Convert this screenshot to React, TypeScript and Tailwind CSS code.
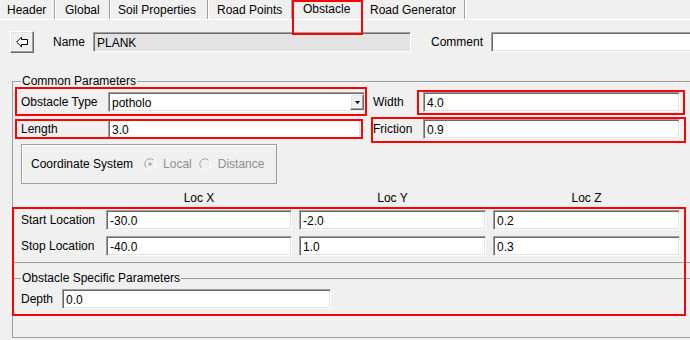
import React from 'react'

const sunken =
  'border border-t-[#a0a0a0] border-l-[#a0a0a0] border-b-white border-r-white shadow-[inset_1px_1px_0_#696969,inset_-1px_-1px_0_#e3e3e3]'
const raised =
  'border border-t-white border-l-white border-b-[#696969] border-r-[#696969] shadow-[inset_-1px_-1px_0_#a0a0a0,inset_1px_1px_0_#e3e3e3]'

function Tab({ w, pl, active, children }: { w: string; pl: string; active?: boolean; children: React.ReactNode }) {
  return (
    <div
      className={`h-[19px] shrink-0 flex border-r border-[#a0a0a0] shadow-[1px_0_0_#fff] ${w} ${pl} ${
        active ? 'items-start pt-[2px]' : 'items-center'
      }`}
    >
      {children}
    </div>
  )
}

function Field({ value, w, bg = 'bg-white' }: { value: string; w: string; bg?: string }) {
  return (
    <div className={`h-[20px] shrink-0 flex items-center pl-[3px] pt-[1px] ${sunken} ${w} ${bg}`}>{value}</div>
  )
}

function Radio({ checked }: { checked?: boolean }) {
  return (
    <svg width="12" height="12" viewBox="0 0 12 12" className="shrink-0 block">
      <circle cx="6" cy="6" r="5" fill="#f0f0f0" />
      <path d="M2.3 9.7 A5 5 0 0 1 9.7 2.3" stroke="#a0a0a0" strokeWidth="1" fill="none" />
      <path d="M2.8 10.2 A5 5 0 0 0 10.2 2.8" stroke="#ffffff" strokeWidth="1" fill="none" />
      {checked && <circle cx="6" cy="6" r="1.6" fill="#a0a0a0" />}
    </svg>
  )
}

export default function App() {
  return (
    <div className="relative w-[690px] h-[340px] overflow-hidden bg-[#f0f0f0] text-[12px] leading-[14px] text-black font-['Liberation_Sans',Arial,sans-serif]">
      {/* tab strip */}
      <div className="flex h-[20px] border-b border-white">
        <Tab w="w-[55px]" pl="pl-[7px]">Header</Tab>
        <Tab w="w-[55px]" pl="pl-[10px]">Global</Tab>
        <Tab w="w-[98px]" pl="pl-[8px]">Soil Properties</Tab>
        <Tab w="w-[84px]" pl="pl-[9px]">Road Points</Tab>
        <Tab w="w-[70px]" pl="pl-[11px]" active>Obstacle</Tab>
        <Tab w="w-[103px]" pl="pl-[8px]">Road Generator</Tab>
      </div>

      {/* name row */}
      <div className="flex items-center mt-[11px] h-[22px] w-[720px]">
        <button className={`ml-[10px] shrink-0 w-[24px] h-[22px] flex items-center justify-center bg-[#f0f0f0] ${raised}`}>
          <svg width="13" height="12" viewBox="0 0 13 12">
            <path d="M0.7 6 L5.5 1.2 L5.5 3.5 L11.5 3.5 L11.5 8.5 L5.5 8.5 L5.5 10.8 Z" fill="#fff" stroke="#000" strokeWidth="1" />
          </svg>
        </button>
        <div className="ml-[19px] w-[40px] shrink-0">Name</div>
        <Field value="PLANK" w="w-[318px]" bg="bg-[#e3e3e3]" />
        <div className="ml-[20px] w-[60px] shrink-0">Comment</div>
        <Field value="" w="w-[210px]" />
      </div>

      {/* common parameters */}
      <fieldset className="mt-[21px] ml-[12px] w-[700px] border border-[#a0a0a0] pl-[8px] pt-[4px] pb-[6px]">
        <legend className="px-[1px] leading-[14px]">Common Parameters</legend>
        <div className="flex items-center h-[20px]">
          <div className="w-[87px] shrink-0">Obstacle Type</div>
          <div className={`h-[20px] w-[257px] shrink-0 bg-white flex items-center pl-[3px] ${sunken}`}>
            <span className="flex-1 pt-[1px]">potholo</span>
            <div className={`w-[14px] h-[16px] flex items-center justify-center bg-[#f0f0f0] ${raised}`}>
              <svg width="5" height="3" viewBox="0 0 5 3">
                <path d="M0 0 H5 L2.5 3 Z" fill="#000" />
              </svg>
            </div>
          </div>
          <div className="ml-[8px] w-[50px] shrink-0">Width</div>
          <Field value="4.0" w="w-[257px]" />
        </div>
        <div className="flex items-center h-[20px] mt-[7px]">
          <div className="w-[87px] shrink-0">Length</div>
          <Field value="3.0" w="w-[253px]" />
          <div className="ml-[12px] w-[50px] shrink-0">Friction</div>
          <Field value="0.9" w="w-[257px]" />
        </div>
        <div className="mt-[5px] w-[256px] h-[40px] border border-[#a0a0a0] shadow-[inset_1px_1px_0_#fff] flex items-center pl-[9px]">
          <span>Coordinate System</span>
          <span className="ml-[11px]"><Radio checked /></span>
          <span className="ml-[7px] text-[#8f8f8f]">Local</span>
          <span className="ml-[7px]"><Radio /></span>
          <span className="ml-[7px] text-[#8f8f8f]">Distance</span>
        </div>
        <div className="mt-[5px] h-[16px] flex items-center pl-[85px] pt-[1px]">
          <div className="w-[186px] text-center">Loc X</div>
          <div className="ml-[7px] w-[187px] text-center">Loc Y</div>
          <div className="ml-[7px] w-[187px] text-center">Loc Z</div>
        </div>
        <div className="mt-[5px] flex items-center h-[20px]">
          <div className="w-[85px] shrink-0">Start Location</div>
          <Field value="-30.0" w="w-[186px]" />
          <div className="ml-[7px]"><Field value="-2.0" w="w-[187px]" /></div>
          <div className="ml-[7px]"><Field value="0.2" w="w-[187px]" /></div>
        </div>
        <div className="mt-[6px] flex items-center h-[20px]">
          <div className="w-[85px] shrink-0">Stop Location</div>
          <Field value="-40.0" w="w-[186px]" />
          <div className="ml-[7px]"><Field value="1.0" w="w-[187px]" /></div>
          <div className="ml-[7px]"><Field value="0.3" w="w-[187px]" /></div>
        </div>
      </fieldset>

      {/* obstacle specific */}
      <fieldset className="mt-[8px] ml-[12px] w-[700px] border border-[#a0a0a0] pl-[8px] pt-[4px] pb-[28px]">
        <legend className="px-[1px] leading-[14px]">Obstacle Specific Parameters</legend>
        <div className="flex items-center h-[20px]">
          <div className="w-[41px] shrink-0">Depth</div>
          <Field value="0.0" w="w-[269px]" />
        </div>
      </fieldset>

      {/* red annotation boxes */}
      <div className="absolute left-[292px] top-0 w-[71px] h-[35px] border-2 border-[#f00]" />
      <div className="absolute left-[15px] top-[87px] w-[352px] h-[29px] border-2 border-[#f00]" />
      <div className="absolute left-[15px] top-[119px] w-[348px] h-[20px] border-2 border-[#f00]" />
      <div className="absolute left-[417px] top-[90px] w-[268px] h-[25px] border-2 border-[#f00]" />
      <div className="absolute left-[371px] top-[117px] w-[315px] h-[26px] border-2 border-[#f00]" />
      <div className="absolute left-[12px] top-[207px] w-[674px] h-[109px] border-2 border-[#f00]" />
    </div>
  )
}
